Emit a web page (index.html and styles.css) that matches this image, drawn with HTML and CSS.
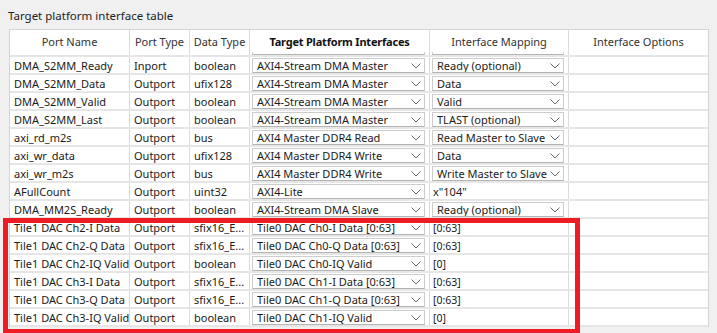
FILE: index.html
```html
<!DOCTYPE html>
<html lang="en">

<head>
    <meta charset="UTF-8">
    <title>Target platform interface table</title>
    <link rel="stylesheet" href="styles.css">
</head>

<body>
    <div class="panel">
        <div class="caption">Target platform interface table</div>

        <div class="grid">
            <div class="row head">
                <div class="cell">Port Name</div>
                <div class="cell">Port Type</div>
                <div class="cell">Data Type</div>
                <div class="cell bold">Target Platform Interfaces</div>
                <div class="cell">Interface Mapping</div>
                <div class="cell">Interface Options</div>
            </div>

            <!-- row scrolled up under the header, only the bottom edge shows -->
            <div class="row peek">
                <div class="cell"></div>
                <div class="cell"></div>
                <div class="cell"></div>
                <div class="cell"><div class="combo"></div></div>
                <div class="cell"><div class="combo"></div></div>
                <div class="cell"></div>
            </div>

            <div class="row">
                <div class="cell">DMA_S2MM_Ready</div>
                <div class="cell">Inport</div>
                <div class="cell">boolean</div>
                <div class="cell"><div class="combo"><span>AXI4-Stream DMA Master</span><svg viewBox="0 0 10 6"><polyline points="0.5,0.5 5,5 9.5,0.5" /></svg></div></div>
                <div class="cell"><div class="combo"><span>Ready (optional)</span><svg viewBox="0 0 10 6"><polyline points="0.5,0.5 5,5 9.5,0.5" /></svg></div></div>
                <div class="cell"></div>
            </div>
            <div class="row">
                <div class="cell">DMA_S2MM_Data</div>
                <div class="cell">Outport</div>
                <div class="cell">ufix128</div>
                <div class="cell"><div class="combo"><span>AXI4-Stream DMA Master</span><svg viewBox="0 0 10 6"><polyline points="0.5,0.5 5,5 9.5,0.5" /></svg></div></div>
                <div class="cell"><div class="combo"><span>Data</span><svg viewBox="0 0 10 6"><polyline points="0.5,0.5 5,5 9.5,0.5" /></svg></div></div>
                <div class="cell"></div>
            </div>
            <div class="row">
                <div class="cell">DMA_S2MM_Valid</div>
                <div class="cell">Outport</div>
                <div class="cell">boolean</div>
                <div class="cell"><div class="combo"><span>AXI4-Stream DMA Master</span><svg viewBox="0 0 10 6"><polyline points="0.5,0.5 5,5 9.5,0.5" /></svg></div></div>
                <div class="cell"><div class="combo"><span>Valid</span><svg viewBox="0 0 10 6"><polyline points="0.5,0.5 5,5 9.5,0.5" /></svg></div></div>
                <div class="cell"></div>
            </div>
            <div class="row">
                <div class="cell">DMA_S2MM_Last</div>
                <div class="cell">Outport</div>
                <div class="cell">boolean</div>
                <div class="cell"><div class="combo"><span>AXI4-Stream DMA Master</span><svg viewBox="0 0 10 6"><polyline points="0.5,0.5 5,5 9.5,0.5" /></svg></div></div>
                <div class="cell"><div class="combo"><span>TLAST (optional)</span><svg viewBox="0 0 10 6"><polyline points="0.5,0.5 5,5 9.5,0.5" /></svg></div></div>
                <div class="cell"></div>
            </div>
            <div class="row">
                <div class="cell">axi_rd_m2s</div>
                <div class="cell">Outport</div>
                <div class="cell">bus</div>
                <div class="cell"><div class="combo"><span>AXI4 Master DDR4 Read</span><svg viewBox="0 0 10 6"><polyline points="0.5,0.5 5,5 9.5,0.5" /></svg></div></div>
                <div class="cell"><div class="combo"><span>Read Master to Slave Bus</span><svg viewBox="0 0 10 6"><polyline points="0.5,0.5 5,5 9.5,0.5" /></svg></div></div>
                <div class="cell"></div>
            </div>
            <div class="row">
                <div class="cell">axi_wr_data</div>
                <div class="cell">Outport</div>
                <div class="cell">ufix128</div>
                <div class="cell"><div class="combo"><span>AXI4 Master DDR4 Write</span><svg viewBox="0 0 10 6"><polyline points="0.5,0.5 5,5 9.5,0.5" /></svg></div></div>
                <div class="cell"><div class="combo"><span>Data</span><svg viewBox="0 0 10 6"><polyline points="0.5,0.5 5,5 9.5,0.5" /></svg></div></div>
                <div class="cell"></div>
            </div>
            <div class="row">
                <div class="cell">axi_wr_m2s</div>
                <div class="cell">Outport</div>
                <div class="cell">bus</div>
                <div class="cell"><div class="combo"><span>AXI4 Master DDR4 Write</span><svg viewBox="0 0 10 6"><polyline points="0.5,0.5 5,5 9.5,0.5" /></svg></div></div>
                <div class="cell"><div class="combo"><span>Write Master to Slave Bus</span><svg viewBox="0 0 10 6"><polyline points="0.5,0.5 5,5 9.5,0.5" /></svg></div></div>
                <div class="cell"></div>
            </div>
            <div class="row">
                <div class="cell">AFullCount</div>
                <div class="cell">Outport</div>
                <div class="cell">uint32</div>
                <div class="cell"><div class="combo"><span>AXI4-Lite</span><svg viewBox="0 0 10 6"><polyline points="0.5,0.5 5,5 9.5,0.5" /></svg></div></div>
                <div class="cell plain">x"104"</div>
                <div class="cell"></div>
            </div>
            <div class="row">
                <div class="cell">DMA_MM2S_Ready</div>
                <div class="cell">Outport</div>
                <div class="cell">boolean</div>
                <div class="cell"><div class="combo"><span>AXI4-Stream DMA Slave</span><svg viewBox="0 0 10 6"><polyline points="0.5,0.5 5,5 9.5,0.5" /></svg></div></div>
                <div class="cell"><div class="combo"><span>Ready (optional)</span><svg viewBox="0 0 10 6"><polyline points="0.5,0.5 5,5 9.5,0.5" /></svg></div></div>
                <div class="cell"></div>
            </div>
            <div class="row">
                <div class="cell">Tile1 DAC Ch2-I Data</div>
                <div class="cell">Outport</div>
                <div class="cell">sfix16_E...</div>
                <div class="cell"><div class="combo"><span>Tile0 DAC Ch0-I Data [0:63]</span><svg viewBox="0 0 10 6"><polyline points="0.5,0.5 5,5 9.5,0.5" /></svg></div></div>
                <div class="cell plain small">[0:63]</div>
                <div class="cell"></div>
            </div>
            <div class="row">
                <div class="cell">Tile1 DAC Ch2-Q Data</div>
                <div class="cell">Outport</div>
                <div class="cell">sfix16_E...</div>
                <div class="cell"><div class="combo"><span>Tile0 DAC Ch0-Q Data [0:63]</span><svg viewBox="0 0 10 6"><polyline points="0.5,0.5 5,5 9.5,0.5" /></svg></div></div>
                <div class="cell plain small">[0:63]</div>
                <div class="cell"></div>
            </div>
            <div class="row">
                <div class="cell">Tile1 DAC Ch2-IQ Valid</div>
                <div class="cell">Outport</div>
                <div class="cell">boolean</div>
                <div class="cell"><div class="combo"><span>Tile0 DAC Ch0-IQ Valid</span><svg viewBox="0 0 10 6"><polyline points="0.5,0.5 5,5 9.5,0.5" /></svg></div></div>
                <div class="cell plain small">[0]</div>
                <div class="cell"></div>
            </div>
            <div class="row">
                <div class="cell">Tile1 DAC Ch3-I Data</div>
                <div class="cell">Outport</div>
                <div class="cell">sfix16_E...</div>
                <div class="cell"><div class="combo"><span>Tile0 DAC Ch1-I Data [0:63]</span><svg viewBox="0 0 10 6"><polyline points="0.5,0.5 5,5 9.5,0.5" /></svg></div></div>
                <div class="cell plain small">[0:63]</div>
                <div class="cell"></div>
            </div>
            <div class="row">
                <div class="cell">Tile1 DAC Ch3-Q Data</div>
                <div class="cell">Outport</div>
                <div class="cell">sfix16_E...</div>
                <div class="cell"><div class="combo"><span>Tile0 DAC Ch1-Q Data [0:63]</span><svg viewBox="0 0 10 6"><polyline points="0.5,0.5 5,5 9.5,0.5" /></svg></div></div>
                <div class="cell plain small">[0:63]</div>
                <div class="cell"></div>
            </div>
            <div class="row">
                <div class="cell">Tile1 DAC Ch3-IQ Valid</div>
                <div class="cell">Outport</div>
                <div class="cell">boolean</div>
                <div class="cell"><div class="combo"><span>Tile0 DAC Ch1-IQ Valid</span><svg viewBox="0 0 10 6"><polyline points="0.5,0.5 5,5 9.5,0.5" /></svg></div></div>
                <div class="cell plain small">[0]</div>
                <div class="cell"></div>
            </div>
        </div>

        <!-- red annotation box drawn over the last six rows -->
        <div class="highlight"></div>
    </div>
</body>

</html>
```

FILE: styles.css
```css
* {
    box-sizing: border-box;
}

body {
    margin: 0;
    background: #f0f0f0;
    color: #1a1a1a;
    font-family: "Noto Sans", "Open Sans", sans-serif;
    font-size: 11px;
    overflow: hidden;
}

.panel {
    position: relative;
    height: 333px;
    padding: 0 0 0 9px;
}

.caption {
    height: 29px;
    padding: 8px 0 0 0;
    margin-left: -1px;
    color: #222;
    font-size: 11.5px;
    line-height: 16px;
}

.grid {
    width: 700px;
    background: #fff;
    border: 1px solid #d4d4d4;
    border-bottom: none;
}

.row {
    display: grid;
    grid-template-columns: 120px 60px 60px 180px 139px 139px;
    height: 18px;
    border-bottom: 2px solid #e6e6e6;
}

.row.head {
    height: 22px;
    border-bottom: none;
    color: #333;
}

.row.head .cell {
    justify-content: center;
    padding: 2px 0 0 0;
    line-height: 20px;
}

.row.peek {
    height: 5px;
    overflow: hidden;
}

.row.peek .combo {
    height: 3px;
    border-top: none;
}

.cell {
    display: flex;
    align-items: center;
    min-width: 0;
    padding: 2px 0 0 4px;
    border-right: 1px solid #dadada;
    white-space: nowrap;
    overflow: hidden;
    line-height: 14px;
}

.cell:last-child {
    border-right: none;
}

.bold {
    font-weight: 700;
    color: #111;
    letter-spacing: -0.2px;
}

.cell.plain {
    padding-left: 3px;
}

.cell.small {
    font-size: 10.5px;
}

.combo {
    display: flex;
    align-items: center;
    width: calc(100% - 2px);
    height: 15px;
    margin: -2px 0 0 -2px;
    padding: 1px 3px 0 4px;
    background: #fff;
    border: 1px solid #cdcdcd;
    border-bottom-color: #b4b4b4;
}

.combo span {
    flex: 1;
    overflow: hidden;
    white-space: nowrap;
    line-height: 13px;
}

.combo svg {
    flex: none;
    width: 10px;
    height: 6px;
    margin-left: 3px;
    fill: none;
    stroke: #6a6a6a;
    stroke-width: 1;
}

.highlight {
    position: absolute;
    left: 3px;
    top: 218px;
    width: 577px;
    height: 116px;
    border: 5px solid #ed1c24;
}
```
